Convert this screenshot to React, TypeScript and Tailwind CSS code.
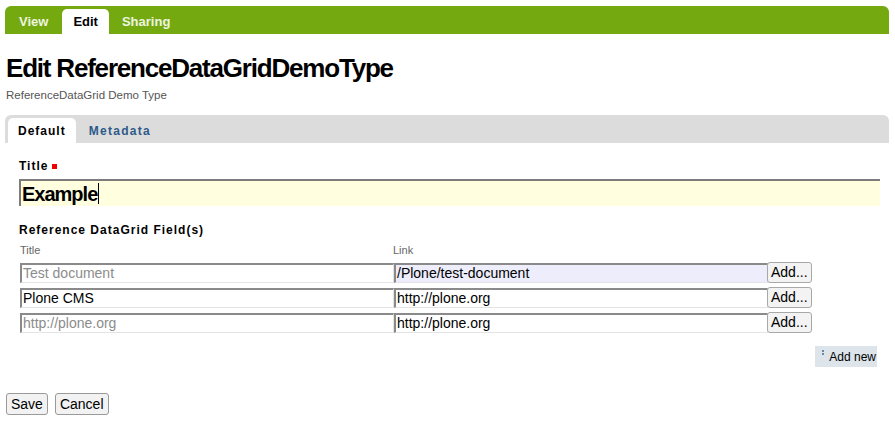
import React from "react";

const font = { fontFamily: '"Liberation Sans", Arial, sans-serif' };

type Row = { title: string; titlePlaceholder?: boolean; link: string; linkBg?: string };

const rows: Row[] = [
  { title: "Test document", titlePlaceholder: true, link: "/Plone/test-document", linkBg: "bg-[#ededfc]" },
  { title: "Plone CMS", link: "http://plone.org" },
  { title: "http://plone.org", titlePlaceholder: true, link: "http://plone.org" },
];

function GridInput({ value, muted, bg }: { value: string; muted?: boolean; bg?: string }) {
  return (
    <div
      className={`h-[20px] w-[374px] border-t-2 border-l-2 border-r border-b border-t-[#8a8a8a] border-l-[#8a8a8a] border-r-[#e4e4e4] border-b-[#e4e4e4] pl-[1px] text-[14px] leading-[17px] ${
        bg || "bg-white"
      } ${muted ? "text-[#8c8c8c]" : "text-black"}`}
    >
      {value}
    </div>
  );
}

export default function App() {
  return (
    <div className="min-h-[428px] w-[895px] bg-white pl-[5px] pt-[6px]" style={font}>
      {/* top green action tabs */}
      <div className="flex h-[28px] w-[884px] items-end rounded-t-[6px] bg-[#74a90f] pl-[4px]">
        <div className="flex h-[25px] items-center pl-[10px] pr-[14px] text-[13px] font-bold text-[#eef5e0]">View</div>
        <div className="flex h-[25px] items-center rounded-t-[5px] bg-white px-[11px] text-[13px] font-bold text-black">
          Edit
        </div>
        <div className="flex h-[25px] items-center px-[13px] text-[13px] font-bold text-[#eef5e0]">Sharing</div>
      </div>

      <h1 className="mt-[18px] ml-[1px] text-[26px] leading-[32px] font-bold tracking-[-1.2px] text-black">
        Edit ReferenceDataGridDemoType
      </h1>
      <div className="mt-[5px] ml-[1px] text-[11.5px] leading-[13px] text-[#555]">ReferenceDataGrid Demo Type</div>

      {/* fieldset tabs */}
      <div className="mt-[13px] flex h-[28px] w-[884px] items-end rounded-t-[6px] bg-[#dcdcdc] pl-[3px]">
        <div className="flex h-[25px] items-center rounded-t-[5px] bg-white px-[10px] text-[12px] font-bold tracking-[1px] text-black">
          Default
        </div>
        <div className="flex h-[25px] items-center px-[13px] text-[12px] font-bold tracking-[1.3px] text-[#2d5a89]">
          Metadata
        </div>
      </div>

      <div className="pl-[14px]">
        <div className="mt-[16px] flex items-center text-[12px] leading-[14px] font-bold tracking-[1px] text-black">
          Title
          <span className="ml-[4px] inline-block h-[5px] w-[5px] bg-[#e00]" />
        </div>
        <div className="mt-[6px] flex h-[27px] w-[861px] items-center border-t-2 border-l-2 border-t-[#7c7c7c] border-l-[#7c7c7c] bg-[#ffffe0] pl-[1px] text-[20px] font-bold tracking-[-1px] text-black">
          Example
          <span className="ml-[1px] inline-block h-[21px] w-[1px] bg-black" />
        </div>

        <div className="mt-[17px] text-[12px] leading-[14px] font-bold tracking-[1px] text-black">
          Reference DataGrid Field(s)
        </div>

        <div className="mt-[7px] flex text-[11px] leading-[12px] text-[#666]">
          <div className="w-[374px] pl-[1px]">Title</div>
          <div>Link</div>
        </div>

        <div className="mt-[6px] ml-[1px] flex flex-col gap-[4px]">
          {rows.map((r, i) => (
            <div key={i} className="flex items-center">
              <GridInput value={r.title} muted={r.titlePlaceholder} />
              <GridInput value={r.link} bg={r.linkBg} />
              <button className="ml-[-1px] h-[21px] rounded-[3px] border border-[#a8a8a8] bg-[#f3f3f3] px-[3px] text-[14px] leading-[17px] text-black">
                Add...
              </button>
            </div>
          ))}
        </div>

        <div className="mt-[13px] flex w-[858px] justify-end">
          <div className="flex h-[21px] items-center bg-[#dde4ea] pl-[7px] pr-[1px] text-[12px] text-black">
            <span className="mr-[5px] flex flex-col gap-[1px] self-start pt-[4px]">
              <span className="h-[2px] w-[2px] bg-[#6a8aa3]" />
              <span className="h-[2px] w-[2px] bg-[#6a8aa3]" />
            </span>
            Add new
          </div>
        </div>
      </div>

      <div className="mt-[26px] ml-[1px] flex gap-[7px]">
        <button className="h-[22px] rounded-[3px] border border-[#9a9a9a] bg-[#f2f2f2] px-[4px] text-[14px] text-black">
          Save
        </button>
        <button className="h-[22px] rounded-[3px] border border-[#9a9a9a] bg-[#f2f2f2] px-[4px] text-[14px] text-black">
          Cancel
        </button>
      </div>
    </div>
  );
}
